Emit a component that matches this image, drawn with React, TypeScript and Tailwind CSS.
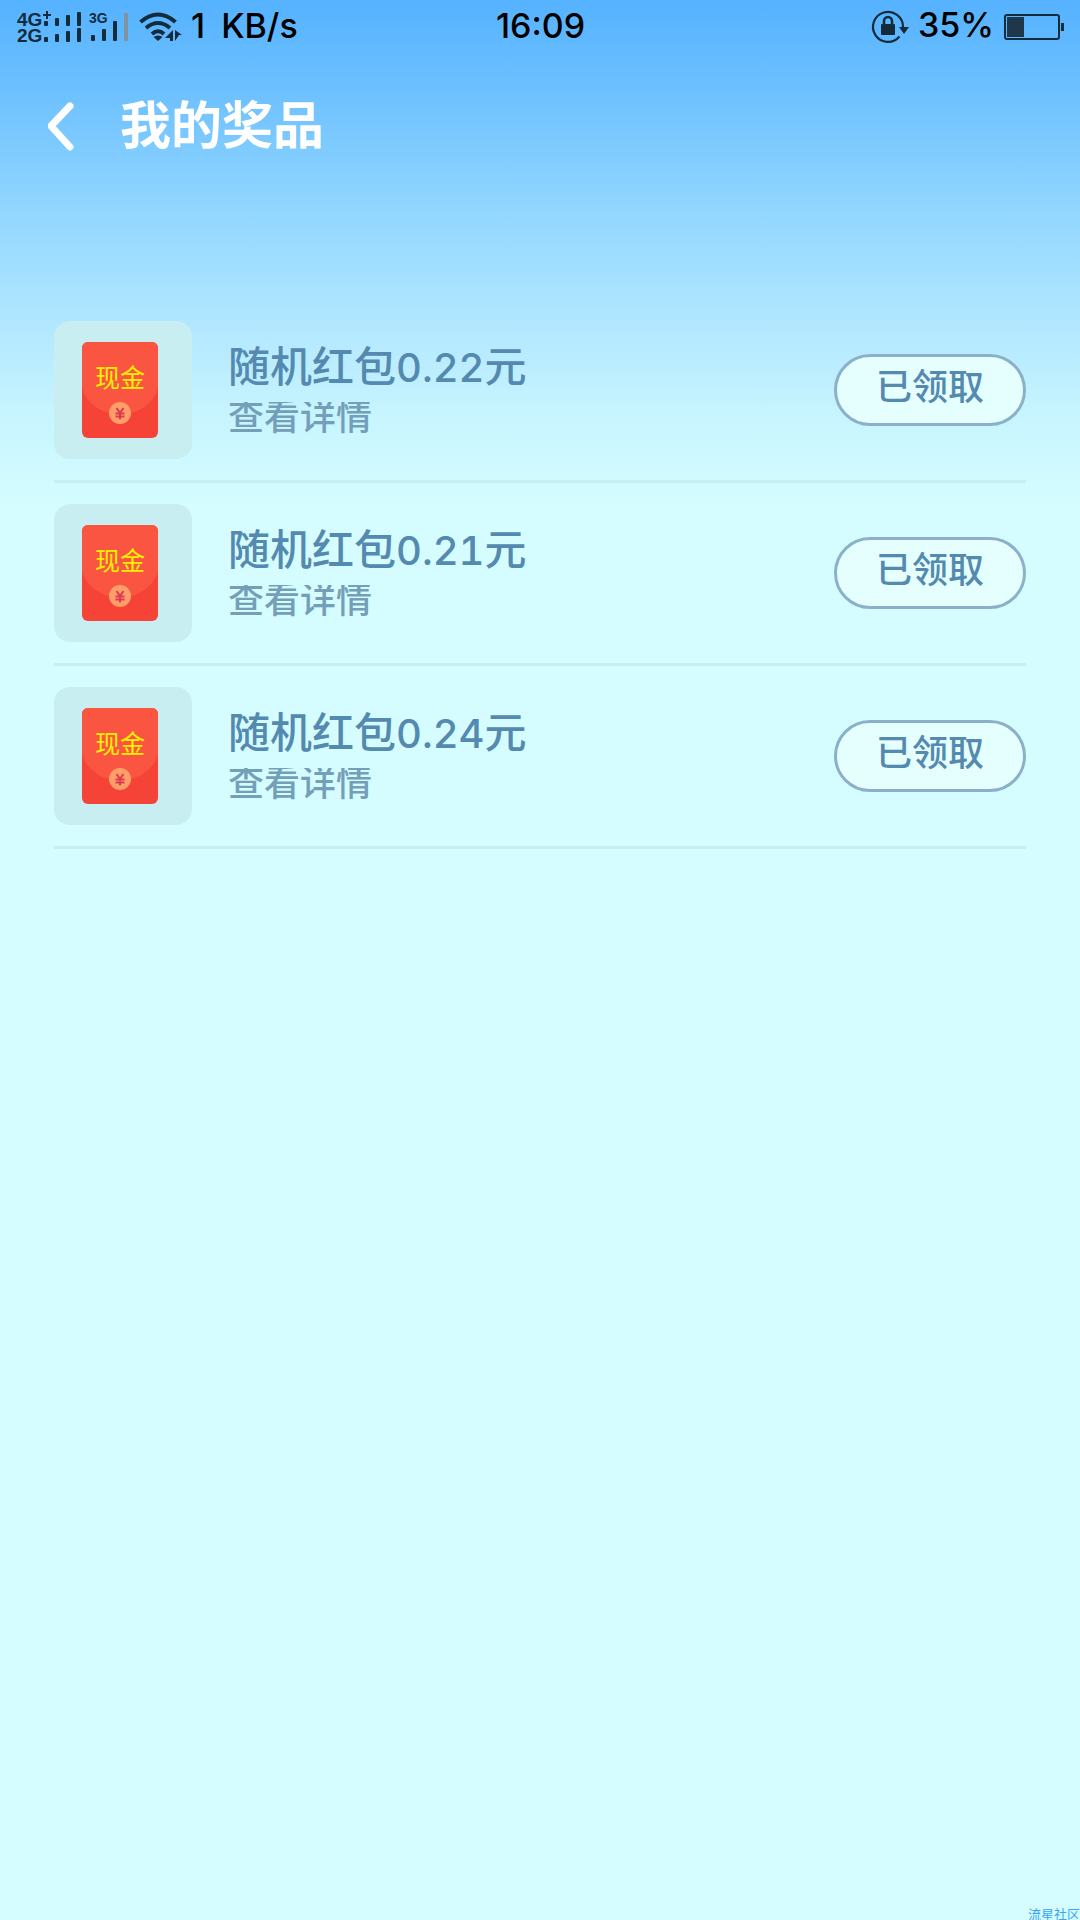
import React from "react";

type Prize = { id: number; amount: string };

const prizes: Prize[] = [
  { id: 1, amount: "0.22" },
  { id: 2, amount: "0.21" },
  { id: 3, amount: "0.24" },
];

function CellularIcons() {
  return (
    <div className="flex h-9 items-start text-[#142b3c]">
      <div className="flex w-[25px] flex-col font-['Liberation_Sans'] text-[19px] leading-4 font-bold">
        <span>4G</span>
        <span>2G</span>
      </div>
      <svg className="overflow-visible" width="39" height="32" viewBox="0 0 39 32" fill="currentColor" aria-hidden="true">
        <path d="M1 3h8M5 -1v8" stroke="currentColor" strokeWidth="2" />
        <rect x="2" y="9" width="4" height="5" rx="1" />
        <rect x="13" y="6" width="4" height="8" rx="1" />
        <rect x="24" y="3" width="4" height="11" rx="1" />
        <rect x="35" y="0" width="4" height="14" rx="1" />
        <rect x="2" y="25" width="4" height="5" rx="1" />
        <rect x="13" y="22" width="4" height="8" rx="1" />
        <rect x="24" y="19" width="4" height="11" rx="1" />
        <rect x="35" y="16" width="4" height="14" rx="1" />
      </svg>
      <div className="relative ml-2 h-8 w-10">
        <span className="absolute top-0 left-0 font-['Liberation_Sans'] text-sm leading-3 font-bold">3G</span>
        <svg width="40" height="32" viewBox="0 0 40 32" fill="currentColor" aria-hidden="true">
          <rect x="2" y="23" width="4" height="6" rx="1" />
          <rect x="13" y="17" width="4" height="12" rx="1" />
          <rect x="24" y="9" width="4" height="20" rx="1" />
          <rect x="35" y="1" width="4" height="28" fill="#7f93a5" />
        </svg>
      </div>
    </div>
  );
}

function WifiIcon() {
  return (
    <svg width="44" height="32" viewBox="0 0 44 32" fill="none" stroke="#142b3c" strokeWidth="4" aria-label="Wi-Fi">
      <path d="M1.500 10Q19 -5 36.500 10" />
      <path d="M7 16Q19 6 31 16" />
      <path d="M13 22Q19 16.500 25 22" />
      <path d="M14.500 25Q19 22 23.500 25L19 29Z" fill="#142b3c" stroke="none" />
      <path d="M26 26L34 18V29H31V26ZM36 18L43 23H40L36 29Z" fill="#142b3c" stroke="none" />
    </svg>
  );
}

function RotationLockIcon() {
  return (
    <svg className="overflow-visible" width="38" height="32" viewBox="0 0 38 32" fill="none" stroke="#142b3c" strokeWidth="2.200" aria-label="Rotation lock">
      <path d="M27.500 24.500A15 15 0 1 1 31 15" />
      <path d="M27 15H37L32 22Z" fill="#142b3c" stroke="none" />
      <rect x="9" y="12" width="14" height="11" rx="1" fill="#142b3c" stroke="none" />
      <path d="M12 13V9a4 4 0 0 1 8 0V13" strokeWidth="2.600" />
    </svg>
  );
}

function BatteryIcon() {
  return (
    <svg width="60" height="26" viewBox="0 0 60 26" fill="none" aria-label="Battery">
      <rect x="1" y="1" width="54" height="24" rx="2" stroke="#142b3c" strokeWidth="2" />
      <rect x="3" y="3" width="17" height="20" fill="#1f374b" />
      <rect x="57" y="9" width="3" height="8" fill="#142b3c" />
    </svg>
  );
}

function StatusBar() {
  return (
    <div className="grid h-14 grid-cols-[1fr_auto_1fr] items-start pt-3 pr-4 pl-[17px] text-[34px] leading-7 font-medium text-black">
      <div className="flex items-start gap-2.5">
        <CellularIcons />
        <WifiIcon />
        <div className="-ml-0.5 flex gap-4">
          <span>1</span>
          <span>KB/s</span>
        </div>
      </div>
      <time>16:09</time>
      <div className="flex items-start justify-end">
        <RotationLockIcon />
        <span className="mr-2.5 ml-2 leading-[26px]">35%</span>
        <div className="pt-0.5">
          <BatteryIcon />
        </div>
      </div>
    </div>
  );
}

function CashPacket() {
  return (
    <div className="flex size-[138px] shrink-0 items-center justify-center rounded-2xl bg-[#c8eef1] pr-1.5">
      <div className="relative h-24 w-[76px] overflow-hidden rounded-md bg-[#f54437]">
        <svg className="absolute inset-0" width="76" height="96" viewBox="0 0 76 96" aria-hidden="true">
          <path d="M0 0H76V46A39 34 0 0 1 0 46Z" fill="#fa5541" />
          <circle cx="38" cy="71" r="11" fill="#ff9e68" />
          <path d="M34.500 66L38 71L41.500 66M33.500 71.500H42.500M33.500 74.500H42.500M38 71V77.500" fill="none" stroke="#dc3a50" strokeWidth="2" />
        </svg>
        <span className="relative block pt-6 text-center text-[25px] leading-6 text-[#fff000]">现金</span>
      </div>
    </div>
  );
}

function PrizeRow({ prize }: { prize: Prize }) {
  return (
    <li className="flex items-center border-b-3 border-[#c8eef1] py-[21px] first:pt-0">
      <CashPacket />
      <div className="ml-9 flex-1 pb-1">
        <h2 className="text-[42px] leading-[52px] font-medium text-[#5489b0]">
          随机红包<span className="text-[40px] tabular-nums">{prize.amount}</span>元
        </h2>
        <a href="#details" className="mt-2 block overflow-hidden pb-1 text-[36px] leading-[30px] font-medium text-[#749fb9]">
          查看详情
        </a>
      </div>
      <button
        type="button"
        className="h-[72px] w-48 shrink-0 rounded-full border-3 border-[#8bb1ca] bg-[#e5ffff] pb-1.5 text-[36px] leading-10 font-medium text-[#5489b0]"
      >
        已领取
      </button>
    </li>
  );
}

export default function App() {
  return (
    <div className="flex min-h-screen flex-col bg-[#d5fdff] bg-[linear-gradient(to_bottom,#55b2ff_0px,#70c2ff_100px,#94d8ff_220px,#b3e8ff_330px,#c6f4ff_410px,#d5fdff_510px)] font-['Inter','Noto_Sans_CJK_SC',sans-serif]">
      <StatusBar />
      <header className="flex h-36 items-start px-12 pt-10">
        <button type="button" aria-label="返回" className="mt-1.5 mr-[46px]">
          <svg width="26" height="50" viewBox="0 0 26 50" fill="none" stroke="white" strokeWidth="7" strokeLinecap="round" strokeLinejoin="round">
            <path d="M22 4L3 24L22 45" />
          </svg>
        </button>
        <h1 className="text-[51px] leading-[60px] font-bold text-white">我的奖品</h1>
      </header>
      <main className="px-[54px] pt-[121px]">
        <ul>
          {prizes.map((prize) => (
            <PrizeRow key={prize.id} prize={prize} />
          ))}
        </ul>
      </main>
      <footer className="mt-auto self-end overflow-hidden text-[13px] leading-3 text-[#3ba4f5]">流星社区</footer>
    </div>
  );
}
